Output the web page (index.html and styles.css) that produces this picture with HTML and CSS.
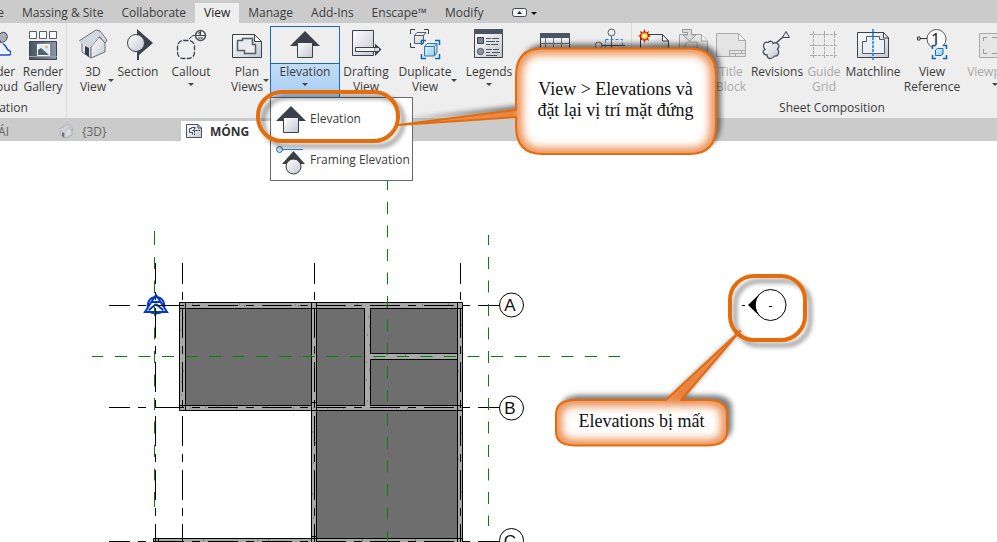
FILE: index.html
```html
<!DOCTYPE html>
<html lang="vi">
<head>
<meta charset="utf-8">
<title>MÓNG</title>
<link rel="stylesheet" href="styles.css">
</head>
<body>
<svg class="defs" aria-hidden="true">
  <defs>
    <linearGradient id="metal" x1="0" y1="0" x2="1" y2="1"><stop offset="0" stop-color="#ffffff"/><stop offset="1" stop-color="#c3c8d0"/></linearGradient>
    <linearGradient id="slate" x1="0" y1="0" x2="1" y2="0"><stop offset="0" stop-color="#4b5463"/><stop offset="1" stop-color="#8b95a3"/></linearGradient>
    <linearGradient id="sky" x1="0" y1="0" x2="1" y2="1"><stop offset="0" stop-color="#e3f4fc"/><stop offset="1" stop-color="#8ecbea"/></linearGradient>
    <symbol id="house" viewBox="0 0 32 32">
      <path d="M5 14 14 19V30L5 24Z" fill="#dfe3e8" stroke="#6b727e"/>
      <path d="M14 19 22 9 28 15V24L14 30Z" fill="url(#metal)" stroke="#6b727e"/>
      <path d="M2 13 19 2 23 3 30 12 28 15 22 8 13 19Z" fill="#d3d7de" stroke="#6b727e"/>
      <path d="M2 13 13 19 22 8" fill="none" stroke="#f4f5f7"/>
      <path d="M8 18 12 20V29L8 26Z" fill="#363d49"/>
    </symbol>
    <symbol id="elevation" viewBox="0 0 32 32">
      <path d="M16 3 31 18H1Z" fill="#3b404b"/>
      <path d="M8.500 14.500H23.500V29.500H8.500Z" fill="url(#metal)" stroke="#3b404b"/>
    </symbol>
  </defs>
</svg>

<nav class="tabs">
  <a class="tab tab-cut" href="#">Analyze</a>
  <a class="tab" href="#">Massing &amp; Site</a>
  <a class="tab" href="#">Collaborate</a>
  <a class="tab tab-on" href="#">View</a>
  <a class="tab" href="#">Manage</a>
  <a class="tab" href="#">Add-Ins</a>
  <a class="tab" href="#">Enscape™</a>
  <a class="tab" href="#">Modify</a>
  <button class="collapse" aria-label="Ribbon display">
    <svg width="26" height="12" viewBox="0 0 26 12"><rect x=".5" y="1.500" width="14" height="8" rx="2" fill="#f4f4f4" stroke="#444a55"/><path d="M7.500 4 10 7H5Z" fill="#222"/><path d="M19 5H25L22 8Z" fill="#111"/></svg>
  </button>
</nav>

<header class="ribbon">
  <section class="panel panel-present">
    <div class="tools">
      <button class="tool w50"><svg class="icon" viewBox="0 0 32 32"><path d="M22 5C26 3 29 6 28 10 27 14 24 14 22 15L19 8Z" fill="#aab0ba" stroke="#3b404b"/><path d="M24 16C27 17 27 20 29 22 33 23 32 27 30 27H14" fill="#eef3ff" stroke="#1d4fc4" stroke-width="1.500"/></svg><span>Render<br>in Cloud</span></button>
      <button class="tool w46"><svg class="icon" viewBox="0 0 32 32"><g fill="#fff" stroke="#555d69"><path d="M2.500 3.500H9.500V10.500H2.500ZM12.500 3.500H19.500V10.500H12.500ZM22.500 3.500H29.500V10.500H22.500Z"/></g><path d="M2.500 13.500H29.500V31.500H2.500Z" fill="url(#slate)" stroke="#3b4350"/><path d="M2 28.500H30" stroke="#9aa3b0"/><path d="M10.500 16.500H22.500V27.500H10.500Z" fill="#dcecf8" stroke="#fff"/><path d="M11 22 14 20 22 27H11Z" fill="#53606f"/><circle cx="19.500" cy="19" r="1.500" fill="#f0c050"/></svg><span>Render<br>Gallery</span></button>
    </div>
    <h2>Presentation</h2>
  </section>

  <section class="panel panel-create">
    <div class="tools">
      <button class="tool w52 side"><svg class="icon"><use href="#house"/></svg><span>3D<br>View</span></button>
      <button class="tool w38"><svg class="icon" viewBox="0 0 32 32"><path d="M15 1 31 15 17 27V32H15Z" fill="#3b404b"/><circle cx="14" cy="15" r="8.500" fill="url(#metal)" stroke="#3b404b"/></svg><span>Section</span></button>
      <button class="tool w68 below"><svg class="icon" viewBox="0 0 32 32"><rect x="2.500" y="12.500" width="17" height="18" rx="6" fill="none" stroke="#3b404b" stroke-width="1.300" stroke-dasharray="5 1.500"/><path d="M14 11 18 7.500H31M25.500 2V8" fill="none" stroke="#3b404b"/><circle cx="25.500" cy="7.500" r="5" fill="none" stroke="#4b515c" stroke-width="1.500"/><path d="M23 5.500 25 4V7M23 10H28" fill="none" stroke="#3b404b"/></svg><span>Callout</span></button>
      <button class="tool w44 side"><svg class="icon" viewBox="0 0 32 32"><path d="M1.500 6.500H23.500L30.500 13.500V29.500H1.500Z" fill="url(#metal)" stroke="#3b404b"/><path d="M23.500 6.500V13.500H30.500Z" fill="#fff" stroke="#3b404b"/><path d="M6.500 12.500H11.500V10.500H21.500V16.500H24.500V25.500H13.500V22.500H6.500Z" fill="#e9ebee" stroke="#555d69" stroke-width="1.500"/></svg><span>Plan<br>Views</span></button>
      <div class="split">
        <button class="tool w70 split-main below"><svg class="icon"><use href="#elevation"/></svg><span>Elevation</span></button>
        <div class="menu">
          <button class="item"><svg class="icon"><use href="#elevation"/></svg>Elevation</button>
          <button class="item"><svg class="icon" viewBox="0 0 32 32"><path d="M7 5.500H28" stroke="#2b86dc"/><circle cx="4.500" cy="5.500" r="3" fill="#bfe6f2" stroke="#276f93"/><path d="M18.500 7 30 20H7Z" fill="#3b3f45"/><circle cx="18.500" cy="22.500" r="7.500" fill="url(#metal)" stroke="#333"/></svg>Framing Elevation</button>
        </div>
      </div>
      <button class="tool w52"><svg class="icon" viewBox="0 0 32 32"><path d="M2.500 2.500H23.500V27.500H2.500Z" fill="url(#metal)" stroke="#3b404b"/><path d="M5.500 19.500H25V23.500H5.500Z" fill="#f2f2f2" stroke="#3b404b"/><path d="M25 15.500 31.500 21.500 25 28Z" fill="#3b404b"/><path d="M25 20H29V23H25Z" fill="#d8dade"/></svg><span>Drafting<br>View</span></button>
      <button class="tool w66 side"><svg class="icon" viewBox="0 0 32 32"><path d="M1.500 6V1.500H6M15 1.500H19.500V6M1.500 15V19.500H6" fill="none" stroke="#3b404b"/><path d="M5.500 7.500 8 4.500H17L14.500 7.500V15.500H5.500ZM5.500 7.500H14.500" fill="url(#metal)" stroke="#555d69"/><path d="M12.500 17V12.500H17M26 12.500H30.500V17M12.500 26V30.500H17M30.500 26V30.500H26" fill="none" stroke="#0f66ae" stroke-width="1.500"/><path d="M15.500 18.500 18 15.500H28L25.500 18.500V28H15.500ZM15.500 18.500H25.500M28 15.500V24L25.500 28" fill="url(#sky)" stroke="#2c7ab0"/></svg><span>Duplicate<br>View</span></button>
      <button class="tool w62 below"><svg class="icon" viewBox="0 0 32 32"><path d="M1.500 1.500H29.500V29.500H1.500Z" fill="url(#metal)" stroke="#3b404b"/><path d="M1 1H30V6H1Z" fill="#4b5463"/><path d="M4.500 9.500H10.500V15.500H4.500Z" fill="#7a8594" stroke="#3b404b"/><circle cx="7.500" cy="23.500" r="3.200" fill="#8b95a3" stroke="#555d69"/><path d="M13 10.500H18M19 10.500H26M13 13.500H22M23 13.500H26M13 16.500H17M18 16.500H25M13 21.500H19M20 21.500H26M13 24.500H17M19 24.500H27M13 27.500H24" stroke="#4b5463"/></svg><span>Legends</span></button>
      <button class="tool w70" aria-label="Schedules"><svg class="icon" viewBox="0 0 32 32"><path d="M1.500 5.500H30.500V30H1.500Z" fill="#f4f5f7" stroke="#3b404b"/><path d="M1 5H31V10H1Z" fill="#4b5463"/><path d="M6.500 10V30M14.500 10V30M22.500 10V30M1 15.500H31M1 20.500H31" stroke="#777f8b"/></svg></button>
      <button class="tool w41" aria-label="Scope Box"><svg class="icon" viewBox="0 0 32 32"><circle cx="16.500" cy="4.500" r="3.500" fill="#eee" stroke="#555d69"/><circle cx="3.500" cy="17.500" r="3.500" fill="#eee" stroke="#555d69"/><path d="M16.500 8V30M7 17.500H30" stroke="#555d69"/><path d="M10.500 11.500H27.500V28.500H10.500Z" fill="none" stroke="#1c8cf0" stroke-dasharray="3 2"/></svg></button>
    </div>
  </section>

  <section class="panel panel-sheet">
    <div class="tools">
      <button class="tool w44" aria-label="Sheet"><svg class="icon" viewBox="0 0 32 32"><path d="M2.500 6.500H24.500L30.500 13V30H2.500Z" fill="url(#metal)" stroke="#3b404b"/><path d="M24.500 6.500V13H30.500Z" fill="#fff" stroke="#3b404b"/><path d="M6.500 1 8 4.500 11 3 10 6.500 13 8 10 9.500 11 13 8 11.500 6.500 15 5 11.500 2 13 3 9.500 0 8 3 6.500 2 3 5 4.500Z" fill="#c8260c"/><circle cx="6.500" cy="8" r="3" fill="#ffed7a" stroke="#f09b1b"/></svg></button>
      <button class="tool w34 off" aria-label="Place View" disabled><svg class="icon" viewBox="0 0 32 32"><path d="M2.500 6.500H24.500L30.500 13V30H2.500Z" fill="#e6e6e6" stroke="#a8a8a8"/><path d="M24.500 6.500V13H30.500" fill="#f4f4f4" stroke="#a8a8a8"/><path d="M5.500 1.500H14.500V7H19L12.500 13 6 7H10.500V4.500H5.500Z" fill="#ddd" stroke="#999"/><path d="M8 20V16L11 14H20V20" fill="none" stroke="#a8a8a8"/></svg></button>
      <button class="tool w42 off" disabled><svg class="icon" viewBox="0 0 32 32"><path d="M1.500 5.500H23.500L30.500 12.500V28.500H1.500Z" fill="#e4e4e4" stroke="#aaa"/><path d="M23.500 5.500V12.500H30.500ZM14.500 22.500H30.500M14.500 22.500V28.500M14.500 25.500H30M20.500 25V28M26.500 22V25" fill="#f4f4f4" stroke="#aaa"/></svg><span>Title<br>Block</span></button>
      <button class="tool w50"><svg class="icon" viewBox="0 0 32 32"><path d="M15 15 22 9" stroke="#3b404b" stroke-width="1.300"/><path d="M25 3.500 28.500 9.500H21.500Z" fill="#eee" stroke="#3b404b"/><path d="M7 14.500C9 12.500 12 13 12 15.500 16 13 20 18 16.500 21 19 24 17 29 13.500 28 11 32 6 31 6 27 2 27 1 23 4 21.500 1 18 3 13 7 14.500Z" fill="url(#metal)" stroke="#4b535f" stroke-width="1.300"/></svg><span>Revisions</span></button>
      <button class="tool w44 off" disabled><svg class="icon" viewBox="0 0 32 32"><path d="M2 6.500H30M2 17.500H30M2 27.500H30M5.500 3V31M16.500 3V31M26.500 3V31" stroke="#aaa" stroke-dasharray="3 1"/></svg><span>Guide<br>Grid</span></button>
      <button class="tool w54"><svg class="icon" viewBox="0 0 32 32"><path d="M.5 4.500H26.500L31.500 10V29.500H.5Z" fill="url(#metal)" stroke="#3b404b"/><path d="M26.500 4.500V10H31.500Z" fill="#fff" stroke="#3b404b"/><path d="M5.500 13.500H9.500V8.500H22.500V11.500H27.500V25.500H5.500Z" fill="#edf0f5" stroke="#555d69"/><path d="M16 1V32" stroke="#0b7fe6" stroke-width="1.500" stroke-dasharray="3 1"/></svg><span>Matchline</span></button>
      <button class="tool w64"><svg class="icon" viewBox="0 0 32 32"><path d="M3 10.500H12" stroke="#333"/><path d="M1.500 9H4V12H1.500Z" fill="#fff" stroke="#333"/><circle cx="20.500" cy="11" r="9.500" fill="#fff" stroke="#555"/><text class="mark" x="15" y="17">1</text><path d="M17 18H30V31H17Z" fill="#eee"/><path d="M16.500 21V17.500H20M27 17.500H30.500V21M16.500 27V30.500H20M30.500 27V30.500H27" fill="none" stroke="#0f66ae" stroke-width="1.500"/><path d="M19.500 22 21.500 20.500H27V26L25 27.500H19.500Z" fill="url(#sky)" stroke="#176eae"/></svg><span>View<br>Reference</span></button>
      <button class="tool w62 off below" disabled><svg class="icon" viewBox="0 0 32 32"><path d="M.5 5.500H31V29.500H.5Z" fill="#e6e6e6" stroke="#aaa"/><path d="M4.500 13V9.500H8M4.500 21V25.500H8M13 9.500H18M13 25.500H18" fill="none" stroke="#999"/></svg><span>Viewports</span></button>
    </div>
    <h2>Sheet Composition</h2>
  </section>
</header>

<nav class="views">
  <a class="view view-cut" href="#">MÁI</a>
  <a class="view view-3d" href="#"><svg class="small faded"><use href="#house"/></svg>{3D}</a>
  <a class="view view-on" href="#"><svg class="small" viewBox="0 0 16 16"><path d="M.5 1.500H12L15.500 5V14.500H.5Z" fill="url(#metal)" stroke="#49505c"/><path d="M12 1.500V5H15.500M3.500 5.500H5.500V4.500H9.500M3.500 5.500V9.500H6.500V11.500" fill="none" stroke="#49505c"/><path d="M8.500 4.500V12M6.500 7.500H14" stroke="#333b48" stroke-dasharray="2 1"/></svg>MÓNG</a>
</nav>

<main class="canvas">
  <svg class="plan" role="img" aria-label="Foundation plan">
    <g transform="translate(0 -141)">
      <g class="wall">
        <path d="M179.500 302.500H462.500V560H311.500V410.500H179.500Z"/>
        <path d="M153.500 538.500H462.500V560H153.500Z"/>
        <path d="M158.500 538V560"/>
      </g>
      <g class="floor">
        <path d="M185.500 308.500H311.500V405.500H185.500Z"/>
        <path d="M316.500 308.500H364.500V405.500H316.500Z"/>
        <path d="M370.500 308.500H457.500V353.500H370.500Z"/>
        <path d="M370.500 359.500H457.500V405.500H370.500Z"/>
        <path d="M316.500 410.500H457.500V538.500H316.500Z"/>
      </g>
      <path class="edge" d="M180 308.500H365M370 308.500H462M180 405.500H312M316 405.500H365M370 405.500H462M185.500 303V410M311.500 303V542M316.500 303V542M457.500 303V542M312 410.500H462M312 402.500H316M312 536.500H316"/>
      <path class="grain" d="M192 304h1M198 305h1M239 304h1M244 306h1M295 305h1M298 306h1M180 311h1M183 318h1M180 330h1M182 365h1M183 371h1M181 382h1M181 395h1M190 408h1M205 407h1M217 406h1M236 409h1M266 407h1M293 408h1M302 406h1M344 306h1M357 304h1M386 307h1M422 305h1M448 304h1M368 317h1M369 326h1M367 335h1M369 345h1M366 362h1M369 370h1M366 380h1M369 388h1M367 401h1M375 357h1M405 355h1M444 356h1M327 408h1M343 408h1M396 408h1M407 409h1M430 407h1M312 432h1M315 443h1M313 463h1M314 477h1M312 494h1M315 506h1M313 518h1M461 325h1M458 371h1M461 433h1M458 459h1M461 492h1M170 541h1M203 540h1M257 540h1M268 540h1M362 540h1M415 540h1"/>
      <g class="axis">
        <path class="dashed" d="M155.500 263V542M182.500 263V542M314.500 263V542M460.500 263V542M109 305.500H499M109 407.500H499M109 541.500H499"/>
      </g>
      <g class="ref">
        <path class="ref-dash" d="M154.500 257V492M115 356.500H620M387.500 202V542M488.500 257V526"/>
        <path d="M154.500 231V245M154.500 492V507M92 356.500H103M387.500 181V190M488.500 235V245"/>
      </g>
      <g class="bubble"><circle cx="511.500" cy="305" r="12"/><circle cx="511.500" cy="408" r="12"/><circle cx="511.500" cy="540.500" r="12"/></g>
      <g class="letter"><text x="510" y="311">A</text><text x="510" y="414">B</text><text x="510" y="547">C</text></g>
      <g class="base"><path d="M156 295 160 301 167 312H145L152 301ZM148 308C147 302 150 297 156 297S165 302 164 308M148 311Q156 316 164 311M156 304 149 310M156 304 163 310M152 302H160"/></g>
      <path class="ref" d="M154.500 281V293M154.500 304V315"/>
      <path class="axis" d="M156 305.500H184M155.500 308V338"/>
      <circle cx="770.500" cy="305" r="15.500" fill="#fff" stroke="#000"/>
      <path d="M748 305 760 293.500C754 301 754 309 760 316.500Z"/>
      <path d="M742 305.500H745M769 306.500H772" stroke="#000"/>
    </g>
  </svg>
</main>

<div class="notes">
  <svg class="note-shapes" width="997" height="542" aria-hidden="true">
    <defs>
      <filter id="shade" x="-20%" y="-20%" width="150%" height="150%"><feDropShadow dx="5" dy="-5" stdDeviation="2.500" flood-color="#000" flood-opacity=".5"/></filter>
      <filter id="shadeRing" x="-20%" y="-20%" width="150%" height="150%"><feDropShadow dx="5" dy="5" stdDeviation="2" flood-color="#000" flood-opacity=".4"/></filter>
      <filter id="soft" filterUnits="userSpaceOnUse" x="380" y="20" width="400" height="450"><feGaussianBlur stdDeviation="5"/></filter>
      <path id="top" d="M542 48.500H690Q716 48.500 716 76V126Q716 154 690 154H542Q516 154 516 126V117L398 125 516 110V76Q516 48.500 542 48.500Z"/>
      <path id="low" d="M576 400H666L740 331 681 400H707Q727 400 727 414V432Q727 445.500 707 445.500H576Q556 445.500 556 432V414Q556 400 576 400Z"/>
      <clipPath id="topClip"><use href="#top"/></clipPath>
      <clipPath id="lowClip"><use href="#low"/></clipPath>
    </defs>
    <g class="ring" filter="url(#shadeRing)">
      <rect x="258" y="92" width="140" height="49" rx="24"/>
      <rect x="730" y="276" width="75" height="64" rx="24"/>
    </g>
    <g fill="#fff" filter="url(#shade)"><use href="#top"/><use href="#low"/></g>
    <g clip-path="url(#topClip)"><use href="#top" class="glow" filter="url(#soft)"/></g>
    <g clip-path="url(#lowClip)"><use href="#low" class="glow" filter="url(#soft)"/></g>
    <use href="#top" class="rim"/><use href="#low" class="rim"/>
  </svg>
  <p class="note note-top">View &gt; Elevations và<br>đặt lại vị trí mặt đứng</p>
  <p class="note note-low">Elevations bị mất</p>
</div>
</body>
</html>
```
FILE: styles.css
```css
* { box-sizing: border-box; }

body {
  margin: 0;
  position: relative;
  min-height: 100vh;
  overflow: hidden;
  background: #fff;
  color: #3c3c3c;
  font: 12px/15px "Open Sans", "Noto Sans", sans-serif;
}

button {
  margin: 0;
  padding: 0;
  border: 0;
  background: none;
  color: inherit;
  font: inherit;
}

a { color: inherit; text-decoration: none; }

.defs { position: absolute; width: 0; height: 0; }

.tabs {
  display: flex;
  align-items: flex-end;
  height: 23px;
  background: #cbcbcb;
}

.tab {
  flex: none;
  height: 20px;
  padding: 0 9px;
  line-height: 20px;
  white-space: nowrap;
}

.tab-cut { display: flex; justify-content: flex-end; width: 13px; padding-left: 0; }
.tab-on { background: #eee; color: #222; }

.collapse { height: 20px; margin-left: 20px; }
.collapse svg { display: block; }

.ribbon {
  display: flex;
  height: 95px;
  overflow: visible;
  background: #eee;
}

.panel {
  display: flex;
  flex: none;
  flex-direction: column;
  justify-content: space-between;
}

.panel-present { width: 148px; margin-left: -82px; padding-left: 52px; }
.panel-present h2 { margin-left: -52px; }
.panel-create, .panel-sheet { border-left: 1px solid #dadada; }
.panel-sheet { flex: 1; min-width: 0; overflow: hidden; }
.panel-sheet h2 { width: 400px; }

.panel h2 {
  margin-top: 0;
  margin-bottom: 2px;
  font-size: 12px;
  font-weight: 400;
  line-height: 16px;
  text-align: center;
}

.tools { display: flex; }

.tool {
  position: relative;
  display: flex;
  flex: none;
  flex-direction: column;
  align-items: center;
  height: 74px;
  padding-top: 5px;
  text-align: center;
  white-space: nowrap;
}

.tool span { margin-top: 4px; }
.off { color: #a9a9a9; }
.icon { flex: none; width: 32px; height: 32px; }

.below::after, .side::after {
  content: "";
  border: 3px solid transparent;
  border-top-color: #444;
  border-bottom: 0;
}

.below::after { margin-top: 4px; }
.side::after { position: absolute; top: 56px; right: 5px; }

.w34 { width: 34px; }
.w38 { width: 38px; }
.w41 { width: 41px; }
.w42 { width: 42px; }
.w44 { width: 44px; }
.w44.side::after { right: 0; }
.w46 { width: 46px; }
.w50 { width: 50px; }
.w52 { width: 52px; }
.w54 { width: 54px; }
.w62 { width: 62px; }
.w64 { width: 64px; }
.w66 { width: 66px; }
.w66.side::after { right: 1px; }
.w68 { width: 68px; }
.w70 { width: 70px; }

.split { position: relative; margin-left: 1px; }

.split-main {
  height: 75px;
  margin-top: 3px;
  padding-top: 1px;
  border: 1px solid #1a68bd;
  background: linear-gradient(#eee 36px, #1a68bd 36px, #1a68bd 37px, #c3dcf5 37px, #a5cdf4);
}

.menu {
  position: absolute;
  z-index: 1;
  top: 74px;
  left: 0;
  width: 143px;
  border: 1px solid #696969;
  background: #fff;
}

.item {
  display: flex;
  align-items: center;
  gap: 3px;
  width: 100%;
  height: 41px;
  padding-left: 4px;
  white-space: nowrap;
}

.views {
  display: flex;
  height: 23px;
  background: #cbcbcb;
  color: #666;
}

.view {
  display: flex;
  align-items: center;
  gap: 8px;
  height: 23px;
  padding-top: 3px;
}

.view-cut { flex: none; justify-content: flex-end; width: 9px; }
.view-3d { width: 123px; margin-left: 49px; }

.view-on {
  width: 180px;
  height: 20px;
  margin-top: 3px;
  padding: 0 0 0 5px;
  background: #fff;
  color: #333;
  font-weight: 700;
}

.small { flex: none; width: 16px; height: 16px; }
.faded { opacity: .65; }

.canvas { overflow: hidden; background: #fff; }
.plan { display: block; width: 100%; height: 401px; }

.wall { fill: #a9a9a9; stroke: #000; }
.floor { fill: #6e6e6e; stroke: #000; }
.edge { fill: none; stroke: #000; }
.grain { stroke: #565656; }
.axis { stroke: #000; }
.dashed { stroke-dasharray: 30 8 8 8; stroke-dashoffset: 9; }
.ref { stroke: #078007; }
.ref-dash { stroke-dasharray: 12 11.500; }
.bubble { fill: #fff; stroke: #000; }
.letter { font: 17px "Liberation Sans", sans-serif; text-anchor: middle; fill: #111; }
.base { fill: none; stroke: #0738c2; stroke-width: 2; }
.mark { font: 16px "Noto Sans", sans-serif; fill: #222; }

.notes { position: absolute; inset: 0; z-index: 2; pointer-events: none; }
.note-shapes { display: block; overflow: visible; }
.ring { fill: none; stroke: #e46c0a; stroke-width: 4; }
.glow { fill: none; stroke: #e9803a; stroke-width: 11; }
.rim { fill: none; stroke: #e46c0a; stroke-width: 2; stroke-linejoin: round; }

.note {
  position: absolute;
  margin: 0;
  color: #111;
  font: 18px/21px "Liberation Serif", serif;
  text-align: center;
  white-space: nowrap;
}

.note-top { top: 79px; left: 515px; width: 201px; }
.note-low { top: 411px; left: 556px; width: 171px; }
```
